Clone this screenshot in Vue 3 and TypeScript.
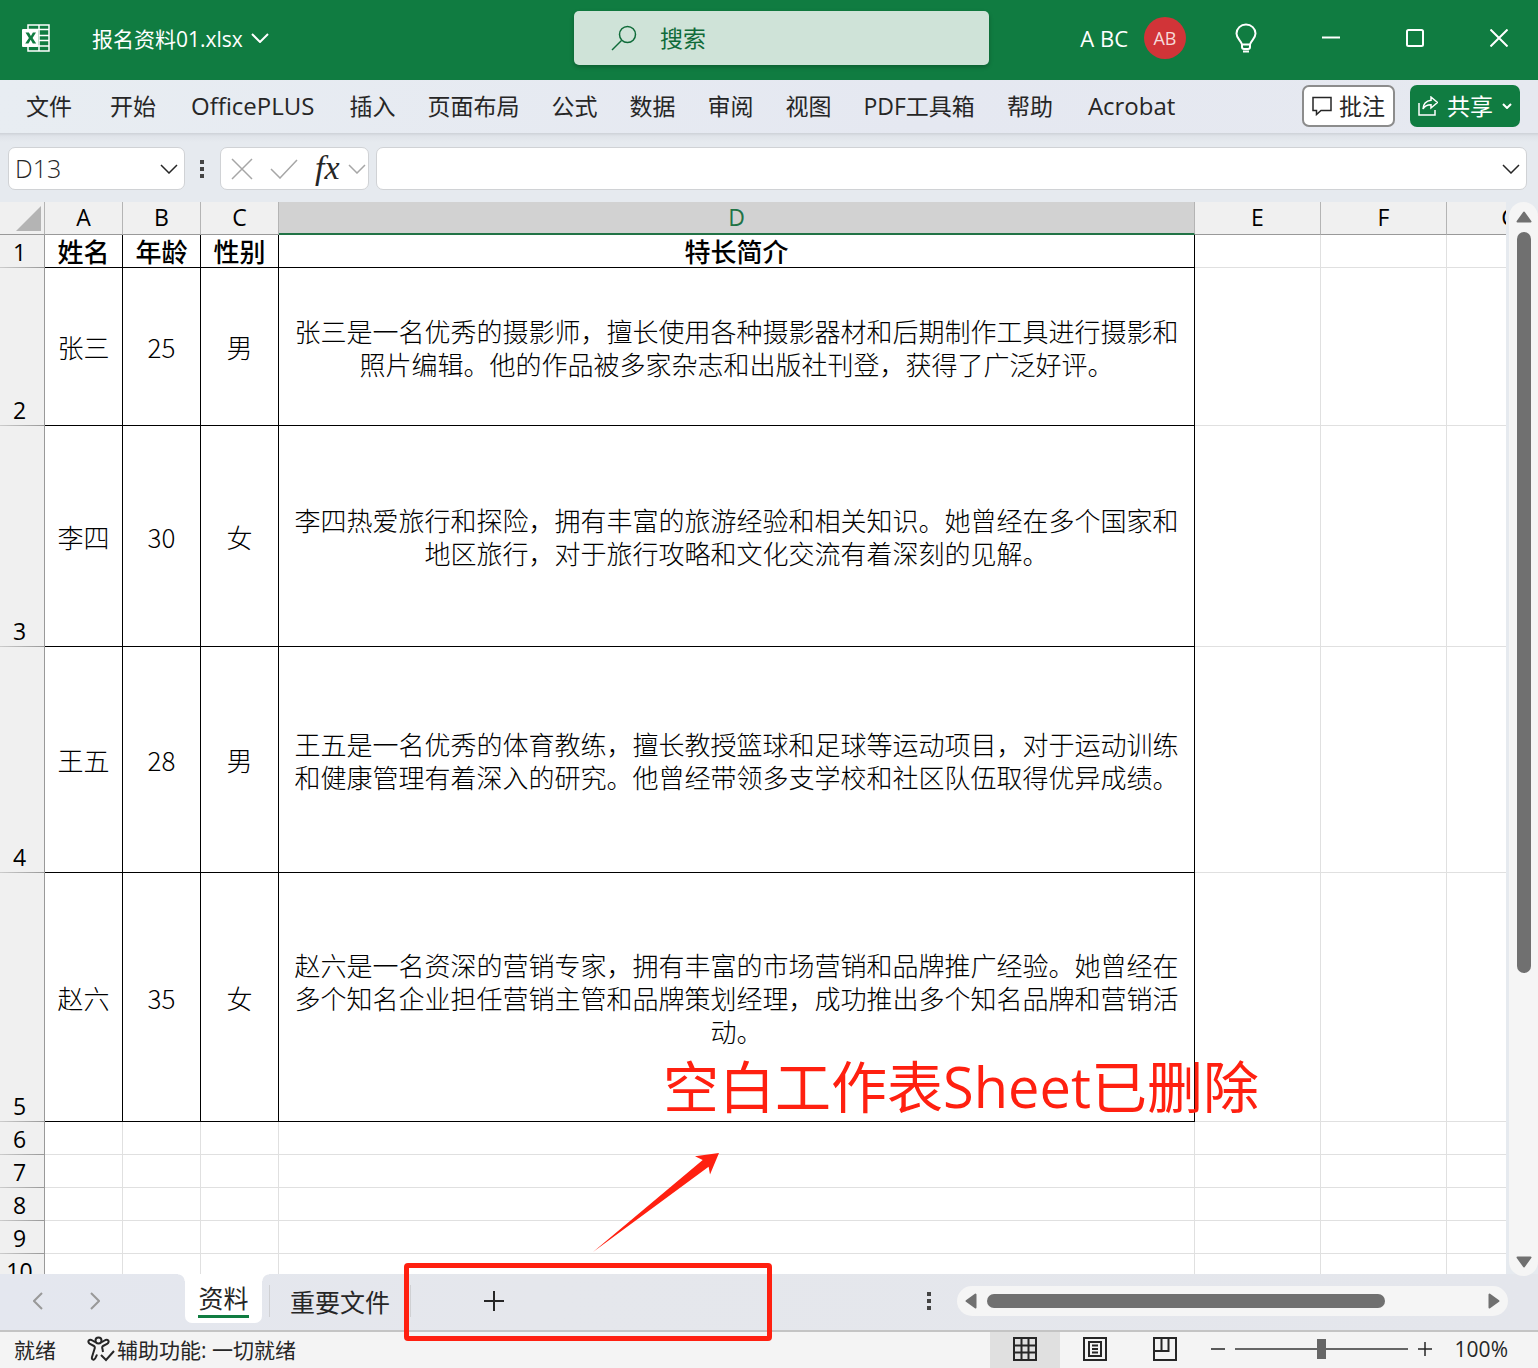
<script setup lang="ts">
import { ref } from 'vue'

interface Column {
  name: string
  width: number
}

interface SheetRow {
  index: number
  height: number
  cells: string[]
}

const columns: Column[] = [
  { name: 'A', width: 78 },
  { name: 'B', width: 78 },
  { name: 'C', width: 78 },
  { name: 'D', width: 916 },
  { name: 'E', width: 126 },
  { name: 'F', width: 126 },
  { name: 'G', width: 126 },
]

const rows: SheetRow[] = [
  { index: 1, height: 33, cells: ['姓名', '年龄', '性别', '特长简介'] },
  {
    index: 2,
    height: 158,
    cells: ['张三', '25', '男', '张三是一名优秀的摄影师，擅长使用各种摄影器材和后期制作工具进行摄影和照片编辑。他的作品被多家杂志和出版社刊登，获得了广泛好评。'],
  },
  {
    index: 3,
    height: 221,
    cells: ['李四', '30', '女', '李四热爱旅行和探险，拥有丰富的旅游经验和相关知识。她曾经在多个国家和地区旅行，对于旅行攻略和文化交流有着深刻的见解。'],
  },
  {
    index: 4,
    height: 226,
    cells: ['王五', '28', '男', '王五是一名优秀的体育教练，擅长教授篮球和足球等运动项目，对于运动训练和健康管理有着深入的研究。他曾经带领多支学校和社区队伍取得优异成绩。'],
  },
  {
    index: 5,
    height: 249,
    cells: ['赵六', '35', '女', '赵六是一名资深的营销专家，拥有丰富的市场营销和品牌推广经验。她曾经在多个知名企业担任营销主管和品牌策划经理，成功推出多个知名品牌和营销活动。'],
  },
  { index: 6, height: 33, cells: [] },
  { index: 7, height: 33, cells: [] },
  { index: 8, height: 33, cells: [] },
  { index: 9, height: 33, cells: [] },
  { index: 10, height: 33, cells: [] },
]

const menus = ['文件', '开始', 'OfficePLUS', '插入', '页面布局', '公式', '数据', '审阅', '视图', 'PDF工具箱', '帮助', 'Acrobat']
const isLatin = (text: string): boolean => /^[A-Za-z]+$/.test(text)

const activeColumn = 'D'
const cellName = ref('D13')
const formula = ref('')
const query = ref('')
const zoom = ref(100)
</script>

<template>
  <div class="excel">
    <header class="titlebar">
      <div class="file">
        <svg class="logo" viewBox="0 0 28 28" width="28" height="28">
          <path d="M6 5V1h21v26H6v-4M17 1v26M6 5.500h21M17 11.500h10M17 16.500h10M6 22h21" fill="none" stroke="#fff" stroke-width="1.500" />
          <rect x="0" y="5" width="16" height="18" rx="1" fill="#fff" stroke="none" />
          <path d="M3.500 8.500h3.400l2 3.600 2-3.600h3.100l-3.400 5.400 3.600 5.600h-3.400l-2.100-3.800-2.200 3.800H3.200l3.700-5.500z" fill="#107c41" stroke="none" />
        </svg>
        <button class="file-name" type="button">
          报名资料01.xlsx
          <svg viewBox="0 0 18 10" width="18" height="10"><path d="M1 1l8 8 8-8" /></svg>
        </button>
      </div>
      <label class="search">
        <svg viewBox="0 0 26 26" width="26" height="26"><circle cx="16.500" cy="9.500" r="8" /><path d="M10.500 15.500L1 25" /></svg>
        <input v-model="query" type="text" placeholder="搜索" aria-label="搜索" />
      </label>
      <div class="window-tools">
        <span class="user">A BC</span>
        <span class="avatar">AB</span>
        <button type="button" class="bulb" aria-label="提示">
          <svg viewBox="0 0 22 30" width="22" height="30">
            <path d="M7 21.500C6 17.500 1.500 15.500 1.500 10.500a9.500 9 0 0 1 19 0c0 5-4.500 7-5.500 11V24a2 2 0 0 1-2 2H9a2 2 0 0 1-2-2v-2.500h8M8 28.500h6" />
          </svg>
        </button>
        <button type="button" aria-label="最小化"><svg viewBox="0 0 18 18" width="18" height="18"><path d="M0 8.500h18" /></svg></button>
        <button type="button" aria-label="最大化"><svg viewBox="0 0 18 18" width="18" height="18"><rect x="1" y="1" width="16" height="16" rx="1.500" /></svg></button>
        <button type="button" aria-label="关闭"><svg viewBox="0 0 18 18" width="18" height="18"><path d="M0.500 0.500l17 17M17.500 0.500l-17 17" /></svg></button>
      </div>
    </header>

    <nav class="ribbon">
      <button v-for="menu in menus" :key="menu" type="button" class="menu" :class="{ latin: isLatin(menu) }">{{ menu }}</button>
      <div class="ribbon-actions">
        <button type="button" class="comment">
          <svg viewBox="0 0 20 20" width="20" height="20"><path d="M1 1.500h18v13H9l-4.500 4v-4H1z" /></svg>
          <span>批注</span>
        </button>
        <button type="button" class="share">
          <svg viewBox="0 0 20 20" width="20" height="20">
            <path d="M1 7v12h16v-5" /><path d="M13 1l6.500 5.500L13 12V8.800c-4 0-6.500 1.200-8 4.200 0-4.500 3-8.500 8-8.800z" />
          </svg>
          <span>共享</span>
          <svg viewBox="0 0 10 6" width="10" height="6"><path d="M1 1l4 4 4-4" stroke-width="2" /></svg>
        </button>
      </div>
    </nav>

    <section class="formula-bar">
      <div class="box name-box">
        <input v-model="cellName" type="text" aria-label="名称框" />
        <button type="button" aria-label="展开名称"><svg viewBox="0 0 18 10" width="18" height="10"><path d="M1 1l8 8 8-8" /></svg></button>
      </div>
      <svg class="dots" viewBox="0 0 6 20" width="6" height="20"><path d="M1 1h4v4H1zM1 8h4v4H1zM1 15h4v4H1z" /></svg>
      <div class="box fx-box">
        <button type="button" class="muted" aria-label="取消"><svg viewBox="0 0 22 22" width="22" height="22"><path d="M1 1l20 20M21 1L1 21" /></svg></button>
        <button type="button" class="muted" aria-label="输入"><svg viewBox="0 0 28 20" width="28" height="20"><path d="M1 10l9 9L27 1" /></svg></button>
        <button type="button" class="fx">fx</button>
        <button type="button" class="muted" aria-label="更多函数"><svg viewBox="0 0 18 10" width="18" height="10"><path d="M1 1l8 8 8-8" /></svg></button>
      </div>
      <div class="box input-box">
        <input v-model="formula" type="text" aria-label="编辑栏" />
        <button type="button" aria-label="展开编辑栏"><svg viewBox="0 0 18 10" width="18" height="10"><path d="M1 1l8 8 8-8" /></svg></button>
      </div>
    </section>

    <main class="workspace">
      <div class="grid-view">
        <table class="grid">
          <colgroup>
            <col class="index-col" />
            <col v-for="column in columns" :key="column.name" :style="{ width: column.width + 'px' }" />
          </colgroup>
          <thead>
            <tr>
              <th class="corner" aria-label="全选"><svg viewBox="0 0 25 25" width="25" height="25"><path d="M25 0v25H0z" /></svg></th>
              <th v-for="column in columns" :key="column.name" scope="col" :class="{ active: column.name === activeColumn }">{{ column.name }}</th>
            </tr>
          </thead>
          <tbody>
            <tr v-for="row in rows" :key="row.index" :style="{ height: row.height + 'px' }">
              <th scope="row">{{ row.index }}</th>
              <td v-for="(column, c) in columns" :key="column.name" :class="{ filled: c < row.cells.length, title: row.index === 1 }">{{ row.cells[c] }}</td>
            </tr>
          </tbody>
        </table>
      </div>
      <div class="v-scroll">
        <svg viewBox="0 0 16 12" width="16" height="12"><path d="M8 1.500L14.500 10.500h-13z" /></svg>
        <div class="v-track"><div class="v-thumb"></div></div>
        <svg viewBox="0 0 16 12" width="16" height="12"><path d="M8 10.500L14.500 1.500h-13z" /></svg>
      </div>
    </main>

    <footer class="sheet-bar">
      <div class="sheet-nav">
        <button type="button" aria-label="上一张"><svg viewBox="0 0 10 18" width="10" height="18"><path d="M9 1L1 9l8 8" /></svg></button>
        <button type="button" aria-label="下一张"><svg viewBox="0 0 10 18" width="10" height="18"><path d="M1 1l8 8-8 8" /></svg></button>
      </div>
      <button type="button" class="sheet current"><span>资料</span></button>
      <button type="button" class="sheet other">重要文件</button>
      <button type="button" class="add" aria-label="新工作表"><svg viewBox="0 0 20 20" width="20" height="20"><path d="M10 0v20M0 10h20" /></svg></button>
      <svg class="dots" viewBox="0 0 6 20" width="6" height="20"><path d="M1 1h4v4H1zM1 8h4v4H1zM1 15h4v4H1z" /></svg>
      <div class="h-scroll">
        <svg viewBox="0 0 12 16" width="12" height="16"><path d="M1.500 8L10.500 1.500v13z" /></svg>
        <div class="h-track"><div class="h-thumb"></div></div>
        <svg viewBox="0 0 12 16" width="12" height="16"><path d="M10.500 8L1.500 1.500v13z" /></svg>
      </div>
    </footer>

    <div class="status">
      <span class="ready">就绪</span>
      <span class="access">
        <svg viewBox="0 0 28 26" width="28" height="26">
          <circle cx="11.500" cy="4.500" r="3" />
          <path d="M8.500 6C6 5.500 4.500 3 2.500 4s-1 3 .5 4L7 10c1 .5 1 1.500.5 3L5 21c-.5 2 .5 3 2 2.500s2-2.500 3-5M14.500 6C17 5.500 18.500 3 20.500 4s1 3-.5 4L16 10c-1 .5-1 1.500-.5 3l.5 3" />
          <path d="M14 19l5 5 8-9" />
        </svg>
        辅助功能: 一切就绪
      </span>
      <div class="views">
        <button type="button" class="selected" aria-label="普通"><svg viewBox="0 0 24 24" width="24" height="24"><path d="M1 1h22v22H1zM1 8.500h22M1 15.500h22M8.500 1v22M15.500 1v22" /></svg></button>
        <button type="button" aria-label="页面布局"><svg viewBox="0 0 24 24" width="24" height="24"><path d="M1 1h22v22H1zM6 5h12v14H6zM9 8.500h6M9 12h6M9 15.500h6" /></svg></button>
        <button type="button" aria-label="分页预览"><svg viewBox="0 0 24 24" width="24" height="24"><path d="M1 1h22v22H1zM8.500 1v13M1 14h14.500V1" /></svg></button>
      </div>
      <button type="button" class="step" aria-label="缩小"><svg viewBox="0 0 14 14" width="14" height="14"><path d="M0 7h14" /></svg></button>
      <input v-model="zoom" class="slider" type="range" min="0" max="200" aria-label="缩放" />
      <button type="button" class="step" aria-label="放大"><svg viewBox="0 0 14 14" width="14" height="14"><path d="M0 7h14M7 0v14" /></svg></button>
      <span class="percent">{{ zoom }}%</span>
    </div>

    <div class="note-text">空白工作表Sheet已删除</div>
    <svg class="note-arrow" viewBox="0 0 128 100" width="128" height="100"><path d="M1 99L110.700 7 103 3.300 127 0l-9 21.500-1.400-7.800z" /></svg>
    <div class="note-frame"></div>
  </div>
</template>

<style>
body {
  margin: 0;
}
</style>

<style scoped>
.excel {
  position: relative;
  display: flex;
  flex-direction: column;
  height: 100vh;
  overflow: hidden;
  background: #e6eaef;
  color: #262626;
  font-family: 'Open Sans', 'Noto Sans CJK SC', sans-serif;
  font-size: 23px;
}
button {
  display: flex;
  align-items: center;
  justify-content: center;
  padding: 0;
  border: 0;
  background: none;
  color: inherit;
  font: inherit;
  white-space: nowrap;
}
input {
  min-width: 0;
  padding: 0;
  border: 0;
  outline: 0;
  background: none;
  color: inherit;
  font: inherit;
}
svg {
  flex: none;
  fill: none;
  stroke: currentColor;
  stroke-width: 2;
}
.titlebar {
  display: grid;
  grid-template-columns: 574fr 415fr 549fr;
  flex: none;
  height: 80px;
  background: #107c41;
  color: #fff;
}
.file {
  display: flex;
  align-items: center;
  gap: 42px;
  padding: 0 22px 4px;
}
.file-name {
  gap: 8px;
  font-size: 21px;
}
.search {
  display: flex;
  align-items: center;
  gap: 23px;
  height: 54px;
  margin-top: 11px;
  padding-left: 37px;
  box-sizing: border-box;
  border-radius: 5px;
  background: #cfe3d8;
  color: #0f6b39;
  box-shadow: 0 2px 4px rgba(0, 0, 0, 0.25);
}
.search input {
  flex: 1;
}
.search input::placeholder {
  color: #0f6b39;
  opacity: 1;
}
.search svg {
  stroke-width: 1.500;
}
.window-tools {
  display: flex;
  align-items: center;
  justify-content: flex-end;
  padding: 0 30px 4px 0;
}
.user {
  margin-right: 16px;
  font-size: 22px;
}
.avatar {
  width: 42px;
  height: 42px;
  margin-right: 49px;
  border-radius: 50%;
  background: #d13438;
  color: #f6dada;
  font-size: 18px;
  line-height: 42px;
  text-align: center;
}
.window-tools button + button {
  margin-left: 66px;
}
.window-tools .bulb + button {
  margin-left: 65px;
}
.ribbon {
  display: flex;
  align-items: center;
  flex: none;
  gap: 32px;
  height: 53px;
  padding: 0 18px 2px 26px;
  box-sizing: border-box;
  background: linear-gradient(100deg, #e8edf2, #e5e8f1 60%, #e6e9f0);
}
.menu {
  padding-bottom: 1px;
}
.menu:first-child {
  margin-right: 6px;
}
.menu.latin {
  padding: 0 3px;
  font-size: 24px;
}
.ribbon-actions {
  display: flex;
  gap: 15px;
  margin-left: auto;
}
.comment,
.share {
  height: 42px;
  box-sizing: border-box;
  border-radius: 7px;
}
.comment span,
.share span {
  padding-bottom: 2px;
}
.comment {
  gap: 7px;
  padding: 0 8px;
  border: 2px solid #8c8c8c;
  background: #fff;
}
.share {
  gap: 9px;
  padding: 0 8px;
  background: #107c41;
  color: #fff;
}
.comment svg,
.share svg {
  stroke-width: 1.500;
}
.formula-bar {
  display: flex;
  align-items: center;
  flex: none;
  height: 69px;
  padding: 2px 11px 0 8px;
  box-sizing: border-box;
  background: linear-gradient(#cdd1d7, #dfe3e9 3px, #e6eaef 9px);
}
.box {
  display: flex;
  align-items: center;
  height: 43px;
  box-sizing: border-box;
  border: 1px solid #d0d2d5;
  border-radius: 7px;
  background: #fff;
}
.box svg {
  stroke-width: 1.500;
}
.name-box {
  width: 177px;
  padding: 0 6px;
}
.name-box input {
  flex: 1;
  padding-bottom: 2px;
  font-size: 25px;
  font-weight: 300;
}
.dots {
  fill: #444;
  stroke: none;
}
.formula-bar .dots {
  margin: 0 15px 0 14px;
}
.fx-box {
  width: 149px;
  margin-right: 7px;
  padding: 0 2px 0 10px;
  gap: 17px;
}
.muted {
  color: #a6a6a6;
}
.fx {
  padding-bottom: 2px;
  font-family: 'Liberation Serif', serif;
  font-size: 34px;
  font-style: italic;
}
.fx + .muted {
  margin-left: -9px;
}
.input-box {
  flex: 1;
  padding: 0 6px;
}
.input-box input {
  flex: 1;
}
.workspace {
  display: flex;
  flex: 1;
  min-height: 0;
}
.grid-view {
  flex: 1;
  min-width: 0;
  overflow: hidden;
  background: #fff;
}
.grid {
  width: 1573px;
  table-layout: fixed;
  border-collapse: separate;
  border-spacing: 0;
  color: #000;
}
.index-col {
  width: 45px;
}
.grid th,
.grid td {
  box-sizing: border-box;
  padding: 0;
  text-align: center;
}
.grid th {
  background: #f0f0f0;
  border-right: 1px solid #999;
  font-size: 23px;
  font-weight: 400;
  line-height: 29px;
}
.grid thead th {
  height: 33px;
  padding-bottom: 2px;
  border-right-color: #b4b4b4;
  border-bottom: 1px solid #999;
}
.grid thead th.active {
  padding-bottom: 1px;
  border-bottom: 2px solid #217346;
  background: #d2d2d2;
  color: #217346;
}
.grid thead .corner {
  padding: 0 3px 0 0;
  text-align: right;
  vertical-align: bottom;
}
.corner svg {
  display: block;
  margin: 0 0 3px auto;
  fill: #b4b4b4;
  stroke: none;
}
.grid tbody th {
  padding: 0 5px 1px 0;
  background: linear-gradient(to right, #ccc, #999) bottom / 100% 1px no-repeat #f0f0f0;
  vertical-align: bottom;
}
.grid td {
  padding: 0 4px;
  border-right: 1px solid #e0e0e0;
  border-bottom: 1px solid #e0e0e0;
  font-family: 'Noto Sans CJK SC', sans-serif;
  font-size: 26px;
  font-weight: 300;
  line-height: 33px;
  vertical-align: middle;
}
.grid td.filled {
  border-color: #000;
}
.grid td.title {
  font-weight: 500;
  line-height: 32px;
}
.v-scroll {
  display: flex;
  flex-direction: column;
  align-items: center;
  width: 29px;
  margin: 0 0 -2px 3px;
  padding: 9px 0 8px;
  box-sizing: border-box;
  border-radius: 15px;
  background: #f5f5f5;
  z-index: 1;
}
.v-scroll svg,
.h-scroll svg {
  fill: #707070;
  stroke: #707070;
  stroke-linejoin: round;
}
.v-track {
  flex: 1;
  width: 14px;
  padding: 9px 0;
}
.v-thumb {
  height: 73%;
  border-radius: 7px;
  background: #707070;
}
.sheet-bar {
  display: flex;
  align-items: center;
  flex: none;
  height: 58px;
  padding: 0 30px 2px 0;
  box-sizing: border-box;
  border-bottom: 2px solid #c4c4c4;
  background: linear-gradient(90deg, #e4e7ef, #e5e7ec 35%, #e4e6ec);
}
.sheet-nav {
  display: flex;
  gap: 47px;
  width: 152px;
  padding-left: 33px;
  color: #999;
}
.sheet {
  font-size: 25px;
}
.current {
  position: relative;
  align-self: flex-start;
  width: 77px;
  height: 49px;
  border-radius: 0 0 7px 7px;
  background: #fff;
}
.current::before,
.current::after {
  position: absolute;
  top: 0;
  width: 7px;
  height: 7px;
  content: '';
}
.current::before {
  right: 100%;
  background: radial-gradient(circle at 0 100%, transparent 6px, #fff 7px);
}
.current::after {
  left: 100%;
  background: radial-gradient(circle at 100% 100%, transparent 6px, #fff 7px);
}
.current span {
  height: 39px;
  border-bottom: 3px solid #107c41;
  box-sizing: border-box;
  line-height: 38px;
}
.other {
  height: 32px;
  margin-left: 7px;
  padding: 0 20px;
  border: solid #cfd0d3;
  border-width: 0 1px;
}
.add {
  margin: 0 auto 0 73px;
}
.h-scroll {
  display: flex;
  align-items: center;
  gap: 10px;
  width: 551px;
  height: 30px;
  margin-left: 25px;
  padding: 0 8px;
  box-sizing: border-box;
  border-radius: 15px;
  background: #f5f5f5;
}
.h-track {
  flex: 1;
}
.h-thumb {
  width: 81%;
  height: 14px;
  border-radius: 7px;
  background: #707070;
}
.status {
  display: flex;
  align-items: center;
  flex: none;
  height: 36px;
  padding: 0 30px 2px 14px;
  box-sizing: border-box;
  background: #f4f4f4;
  font-size: 21px;
}
.access {
  display: flex;
  align-items: center;
  gap: 2px;
  margin-left: 31px;
}
.views {
  display: flex;
  margin: 0 0 -2px auto;
}
.views button {
  width: 70px;
  height: 36px;
  padding: 0 0 2px;
}
.selected.selected {
  background: #e0e0e0;
}
.step svg {
  stroke-width: 1.500;
}
.views + .step {
  margin-left: 11px;
}
.slider {
  appearance: none;
  width: 173px;
  height: 20px;
  margin: 0 10px;
  background: linear-gradient(#666, #666) center / 100% 2px no-repeat;
}
.slider::-webkit-slider-thumb {
  appearance: none;
  width: 9px;
  height: 20px;
  background: #666;
}
.percent {
  width: 56px;
  margin-left: 20px;
  text-align: right;
}
.note-text {
  position: absolute;
  left: 663px;
  top: 1044px;
  color: #ff2010;
  font-size: 56px;
  line-height: 84px;
  white-space: nowrap;
}
.note-arrow {
  position: absolute;
  left: 592px;
  top: 1153px;
  fill: #ff2010;
  stroke: none;
}
.note-frame {
  position: absolute;
  left: 404px;
  top: 1263px;
  width: 368px;
  height: 78px;
  box-sizing: border-box;
  border: 5px solid #ff2010;
  border-radius: 4px;
}
</style>
